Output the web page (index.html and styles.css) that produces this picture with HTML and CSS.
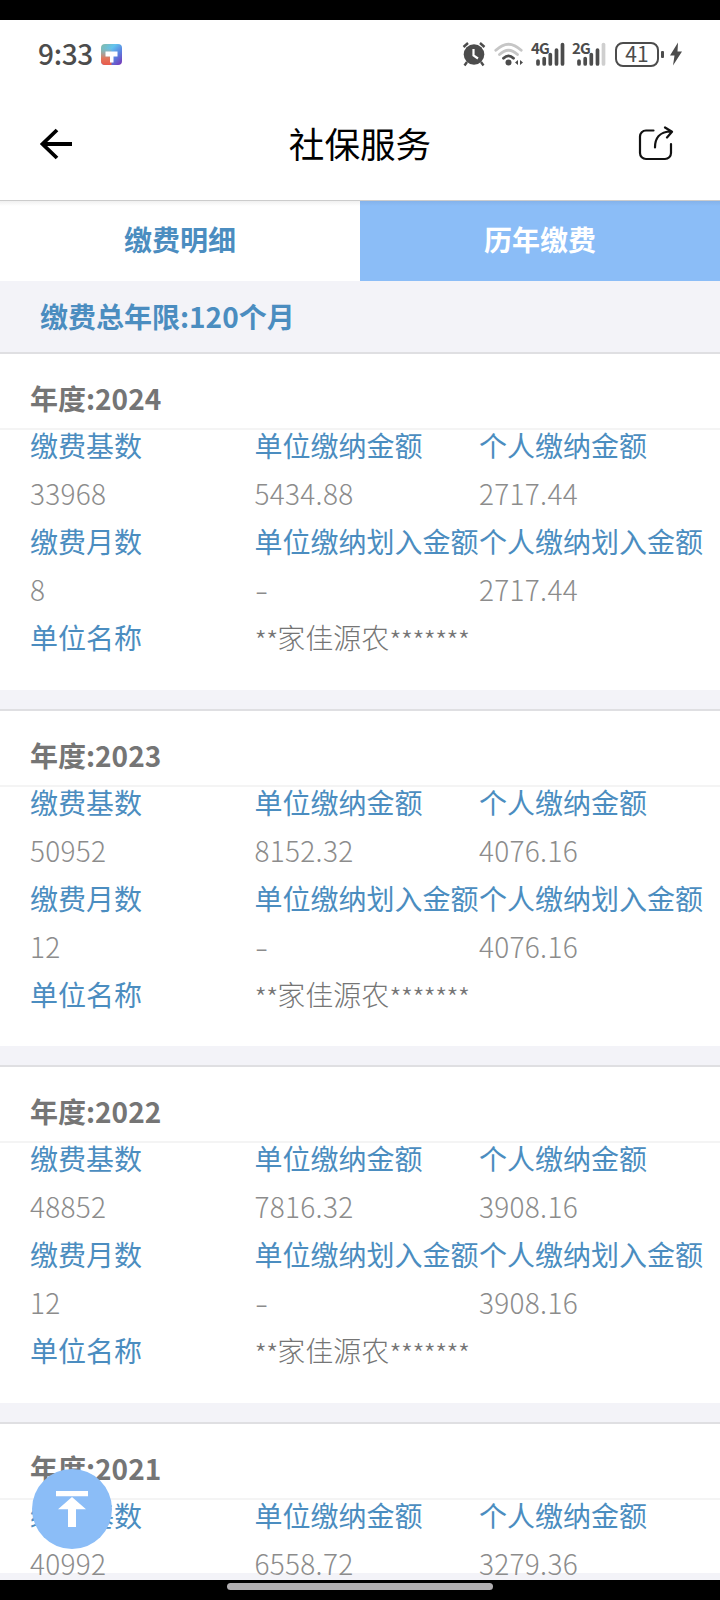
FILE: index.html
```html
<!DOCTYPE html>
<html lang="zh-CN">

<head>
    <meta charset="utf-8">
    <meta name="viewport" content="width=device-width, initial-scale=1.0">
    <title>社保服务</title>

    <link rel="stylesheet" href="styles.css">
</head>

<body>

    <div class="statusbar">
        <span class="time">9:33</span>
        <svg class="app-icon" width="21" height="21" viewBox="0 0 21 21">
            <defs>
                <linearGradient id="icon-top" x1="0" y1="0" x2="1" y2="1">
                    <stop offset="0" stop-color="#86b9a4" />
                    <stop offset=".35" stop-color="#62c4ee" />
                    <stop offset=".65" stop-color="#5a80e0" />
                    <stop offset="1" stop-color="#7a2fb4" />
                </linearGradient>
                <linearGradient id="icon-left" x1="0" y1="0" x2="0" y2="1">
                    <stop offset="0" stop-color="#c8a06c" stop-opacity="0" />
                    <stop offset=".6" stop-color="#e2775c" />
                    <stop offset="1" stop-color="#ea5a4c" />
                </linearGradient>
            </defs>
            <rect width="21" height="21" rx="4" fill="url(#icon-top)" />
            <path d="M0 4h10.500v17H4a4 4 0 0 1-4-4z" fill="url(#icon-left)" />
            <path d="M4.500 7.500h12v5h-4v6h-3.500v-6H4.500z" fill="#fff" />
        </svg>
        <div class="status-icons">
            <svg class="alarm" width="24" height="26" viewBox="0 0 24 26">
                <path d="M1.500 6 6 2M22.500 6 18 2M5 21l-2.500 3.500M19 21l2.500 3.500" stroke="#4c4c4c" stroke-width="2.400" />
                <circle cx="12" cy="13.500" r="10.300" fill="#4c4c4c" />
                <path d="M11.500 8v6.500l4.500 3" fill="none" stroke="#fff" stroke-width="2.200" />
            </svg>
            <svg class="wifi" width="30" height="26" viewBox="0 0 30 26">
                <g fill="none" stroke-linecap="round" stroke-width="2.800">
                    <path d="M1.800 9.300Q14.500-3 27.200 9.300" stroke="#c6c6c6" />
                    <path d="M5.500 13.500q9-8.500 18 0" stroke="#c6c6c6" />
                    <path d="M9.500 17.300q5-5 10 0" stroke="#4c4c4c" />
                </g>
                <circle cx="14.500" cy="21.500" r="3" fill="#4c4c4c" />
                <path d="M24 19v5l-3-2.500zM26 19v5l3-2.500z" fill="#4c4c4c" />
            </svg>
            <span class="signal">
                <span class="net">4G</span>
                <svg width="34" height="26" viewBox="0 0 34 26">
                    <path d="M7 20v3M13.200 17.500V23M19.300 13.500V23M25.500 9V23M31.500 3.500V23" stroke="#4c4c4c" stroke-width="3.700" stroke-linecap="round" />
                </svg>
            </span>
            <span class="signal">
                <span class="net">2G</span>
                <svg width="34" height="26" viewBox="0 0 34 26">
                    <path d="M7 20v3M13.200 17.500V23M19.300 13.500V23M25.500 9V23" stroke="#4c4c4c" stroke-width="3.700" stroke-linecap="round" />
                    <path d="M31.500 3.500V23" stroke="#cfcfcf" stroke-width="3.700" stroke-linecap="round" />
                </svg>
            </span>
            <span class="battery">41</span>
            <span class="battery-cap"></span>
            <svg class="bolt" width="12" height="24" viewBox="0 0 12 24">
                <path d="M8 .5 0 13.500h4.500L3 23.500l9-14H7.500z" fill="#4c4c4c" />
            </svg>
        </div>
    </div>

    <header>
        <svg class="back" width="34" height="34" viewBox="0 0 34 34">
            <path d="M18 3 3.500 17 18 31M4 17h29" fill="none" stroke="#000" stroke-width="3.800" />
        </svg>
        <h1>社保服务</h1>
        <svg class="share" width="36" height="36" viewBox="0 0 36 36">
            <path d="M15.500 4.500H8a6 6 0 0 0-6 6V27a6 6 0 0 0 6 6h19a6 6 0 0 0 6-6v-9" fill="none" stroke="#111" stroke-width="2.200" stroke-linecap="round" />
            <path d="M17 21.500C17 13 21 5.500 33 5.500M27 1.500l7 4.300-5 5.700" fill="none" stroke="#111" stroke-width="2.200" stroke-linecap="round" stroke-linejoin="round" />
        </svg>
    </header>

    <main>
        <nav>
            <a class="tab">缴费明细</a>
            <a class="tab active">历年缴费</a>
        </nav>

        <div class="total">缴费总年限:120个月</div>

        <article>
            <h2>年度:2024</h2>
            <div class="data">
                <span class="label">缴费基数</span>
                <span class="label">单位缴纳金额</span>
                <span class="label">个人缴纳金额</span>
                <span>33968</span>
                <span>5434.88</span>
                <span>2717.44</span>
                <span class="label">缴费月数</span>
                <span class="label">单位缴纳划入金额</span>
                <span class="label">个人缴纳划入金额</span>
                <span>8</span>
                <span class="none">-</span>
                <span>2717.44</span>
                <span class="label">单位名称</span>
                <span class="company"><i>**</i>家佳源农<i>*******</i></span>
            </div>
        </article>

        <article>
            <h2>年度:2023</h2>
            <div class="data">
                <span class="label">缴费基数</span>
                <span class="label">单位缴纳金额</span>
                <span class="label">个人缴纳金额</span>
                <span>50952</span>
                <span>8152.32</span>
                <span>4076.16</span>
                <span class="label">缴费月数</span>
                <span class="label">单位缴纳划入金额</span>
                <span class="label">个人缴纳划入金额</span>
                <span>12</span>
                <span class="none">-</span>
                <span>4076.16</span>
                <span class="label">单位名称</span>
                <span class="company"><i>**</i>家佳源农<i>*******</i></span>
            </div>
        </article>

        <article>
            <h2>年度:2022</h2>
            <div class="data">
                <span class="label">缴费基数</span>
                <span class="label">单位缴纳金额</span>
                <span class="label">个人缴纳金额</span>
                <span>48852</span>
                <span>7816.32</span>
                <span>3908.16</span>
                <span class="label">缴费月数</span>
                <span class="label">单位缴纳划入金额</span>
                <span class="label">个人缴纳划入金额</span>
                <span>12</span>
                <span class="none">-</span>
                <span>3908.16</span>
                <span class="label">单位名称</span>
                <span class="company"><i>**</i>家佳源农<i>*******</i></span>
            </div>
        </article>

        <article class="last">
            <h2>年度:2021</h2>
            <div class="data">
                <span class="label">缴费基数</span>
                <span class="label">单位缴纳金额</span>
                <span class="label">个人缴纳金额</span>
                <span>40992</span>
                <span>6558.72</span>
                <span>3279.36</span>
            </div>
        </article>
    </main>

    <button class="to-top">
        <svg width="32" height="36" viewBox="0 0 32 36">
            <path d="M0 0h32v5.300H0zM16 6l14 12.300H20V36h-8V18.300H2z" fill="#fff" />
        </svg>
    </button>

    <footer>
        <div class="home-bar"></div>
    </footer>

</body>

</html>
```
FILE: styles.css
```css
* {
    box-sizing: border-box;
}

body {
    margin: 0;
    height: 1600px;
    display: flex;
    flex-direction: column;
    overflow: hidden;
    background: #fff;
    border-top: 20px solid #000;
    font-family: "Noto Sans CJK SC", sans-serif;
    font-size: 28px;
}

/* status bar */
.statusbar {
    height: 68px;
    flex: none;
    display: flex;
    align-items: center;
    padding: 0 38px 0 38px;
    color: #4c4c4c;
}

.time {
    width: 63px;
    padding-bottom: 2px;
    font-weight: 500;
    letter-spacing: -0.3px;
}

.status-icons {
    margin-left: auto;
    display: flex;
    align-items: center;
}

.wifi {
    margin-left: 8px;
}

.signal {
    position: relative;
    display: flex;
    margin-left: 7px;
}

.signal + .signal {
    margin-left: 7px;
}

.net {
    position: absolute;
    left: 0;
    top: 0;
    font: 700 15px/14px "Liberation Sans Narrow", "Noto Sans CJK SC", sans-serif;
    letter-spacing: -0.9px;
}

.battery {
    width: 44px;
    height: 25px;
    margin-left: 9px;
    border: 2px solid #4c4c4c;
    border-radius: 8px;
    font-size: 21px;
    line-height: 19px;
    text-align: center;
}

.battery-cap {
    width: 3px;
    height: 7px;
    margin: 0 6px 0 2px;
    border-radius: 1px;
    background: #4c4c4c;
}

/* title bar */
header {
    height: 112px;
    flex: none;
    display: grid;
    grid-template-columns: 1fr auto 1fr;
    align-items: center;
    padding: 0 46px 0 39px;
}

h1 {
    margin: 0;
    padding: 0 0 2px 7px;
    font-size: 35.6px;
    line-height: 52px;
    font-weight: 400;
    color: #000;
}

.share {
    justify-self: end;
}

main {
    flex: 1;
    min-height: 0;
    overflow: hidden;
    background: #f3f3f8;
}

nav {
    height: 81px;
    display: flex;
    border-top: 1px solid #ccc;
}

.tab {
    flex: 1;
    background: linear-gradient(#f0f0f0, #fff 5px);
    color: #4b8dc0;
    font-weight: 700;
    text-align: center;
    line-height: 77px;
}

.tab.active {
    background: linear-gradient(#84b2ea, #8bbdf7 5px);
    color: #fff;
}

.total {
    height: 71px;
    padding-left: 40px;
    line-height: 70px;
    font-weight: 700;
    color: #4b8dc0;
}

/* one card for each year */
article {
    height: 337.67px;
    margin-bottom: 19px;
    background: #fff;
    border-top: 2px solid #dfdfe2;
}

article h2 {
    height: 76px;
    margin: 0;
    padding-left: 30px;
    border-bottom: 2px solid #f4f4f4;
    font-size: 28px;
    line-height: 88px;
    font-weight: 700;
    color: #757575;
}

.data {
    display: grid;
    grid-template-columns: 224.5px 224.5px 1fr;
    grid-auto-rows: 48px;
    padding-left: 30px;
    line-height: 31px;
    white-space: nowrap;
    font-weight: 300;
    letter-spacing: 0.3px;
    color: #8c8c8c;
}

.data .label {
    font-weight: 400;
    letter-spacing: 0;
    line-height: 30px;
    color: #4b8dc0;
}

.data .none {
    transform: scaleX(1.4);
    transform-origin: left;
}

.data .company {
    letter-spacing: 0;
    line-height: 30px;
    color: #757575;
}

.company i {
    font-style: normal;
    line-height: 0;
    vertical-align: -3px;
    letter-spacing: -1px;
}

.last {
    height: 151px;
    margin-bottom: 0;
}

.to-top {
    position: fixed;
    left: 32px;
    top: 1469px;
    width: 80px;
    height: 80px;
    display: flex;
    align-items: center;
    justify-content: center;
    padding: 0;
    border: 0;
    border-radius: 50%;
    background: #8bbdf7;
}

footer {
    height: 20px;
    flex: none;
    background: #000;
    padding-top: 3px;
}

.home-bar {
    width: 266px;
    height: 7px;
    margin: 0 auto;
    border-radius: 4px;
    background: #b0aeb0;
}
```
